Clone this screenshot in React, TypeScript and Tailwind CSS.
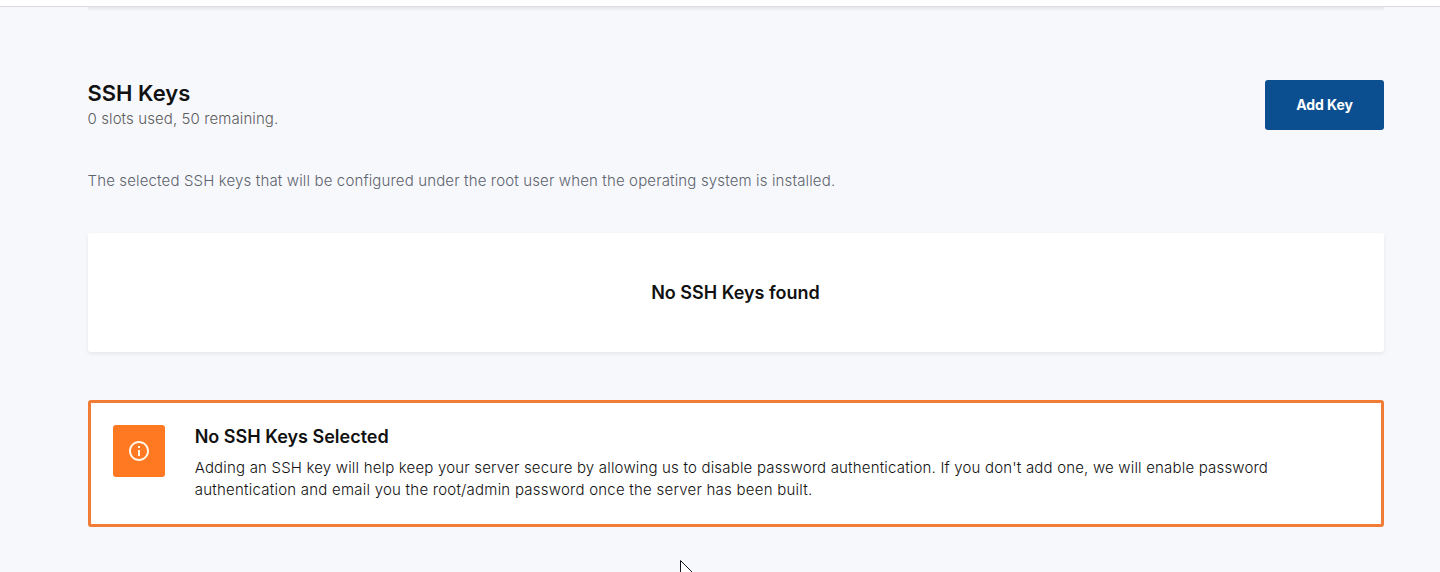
import React from "react";

export default function App() {
  return (
    <div className="relative h-[572px] overflow-hidden bg-[#f7f8fc] font-['Inter',sans-serif] text-[#111111]">
      <div className="h-[7px] border-b border-[#dcdfe2] bg-white" />
      <div className="ml-[88px] h-[4px] w-[1296px] bg-linear-to-b from-[#e6e7eb] to-[#f5f6fa]" />
      <main className="ml-[88px] w-[1296px] pt-[69px]">
        <header className="flex items-start justify-between">
          <div className="-ml-[0.5px]">
            <h1 className="text-[22px] font-semibold leading-[27px]">SSH Keys</h1>
            <p className="text-[15px] font-light leading-[24px] tracking-[0.1px] text-[#5c5c5c]">0 slots used, 50 remaining.</p>
          </div>
          <button className="h-[50px] w-[119px] rounded-[3px] bg-[#0b4f91] pb-[2px] text-[14px] font-bold tracking-[-0.1px] text-white">Add Key</button>
        </header>
        <p className="-ml-[0.5px] mt-[38px] text-[15px] font-light leading-[24px] tracking-[0.145px] text-[#5c636d]">
          The selected SSH keys that will be configured under the root user when the operating system is installed.
        </p>
        <section className="mt-[40px] flex h-[119px] items-center justify-center rounded-[3px] bg-white pr-px shadow-[0_2px_4px_rgba(0,0,0,0.07)]">
          <h2 className="text-[18px] font-semibold">No SSH Keys found</h2>
        </section>
        <section className="mt-[48px] flex h-[127px] rounded-[3px] border-[3px] border-[#f07c35] bg-white pl-[22px] pt-[22px]">
          <div className="flex size-[52px] shrink-0 items-center justify-center rounded-[3px] bg-[#ff7822] text-[#fff6e8]">
            <svg width="24" height="24" viewBox="0 0 24 24" fill="currentColor">
              <path d="M11 7h2v2h-2zm0 4h2v6h-2zm1-9C6.48 2 2 6.48 2 12s4.48 10 10 10 10-4.48 10-10S17.52 2 12 2zm0 18c-4.41 0-8-3.59-8-8s3.59-8 8-8 8 3.59 8 8-3.59 8-8 8z" />
            </svg>
          </div>
          <div className="ml-[29.7px]">
            <h2 className="text-[18px] font-semibold leading-[24px]">No SSH Keys Selected</h2>
            <p className="mt-[8px] w-[1100px] text-[15px] font-light leading-[22px] tracking-[0.183px]">
              Adding an SSH key will help keep your server secure by allowing us to disable password authentication. If you don't add one, we will enable password{" "}
              <span className="tracking-[0.235px]">authentication and email you the root/admin password once the server has been built.</span>
            </p>
          </div>
        </section>
      </main>
      <svg className="absolute left-[680px] top-[560px]" width="14" height="12" viewBox="0 0 14 12">
        <path d="M0.5 0.5V20L20 20Z" fill="#fff" stroke="#14141f" />
      </svg>
    </div>
  );
}
